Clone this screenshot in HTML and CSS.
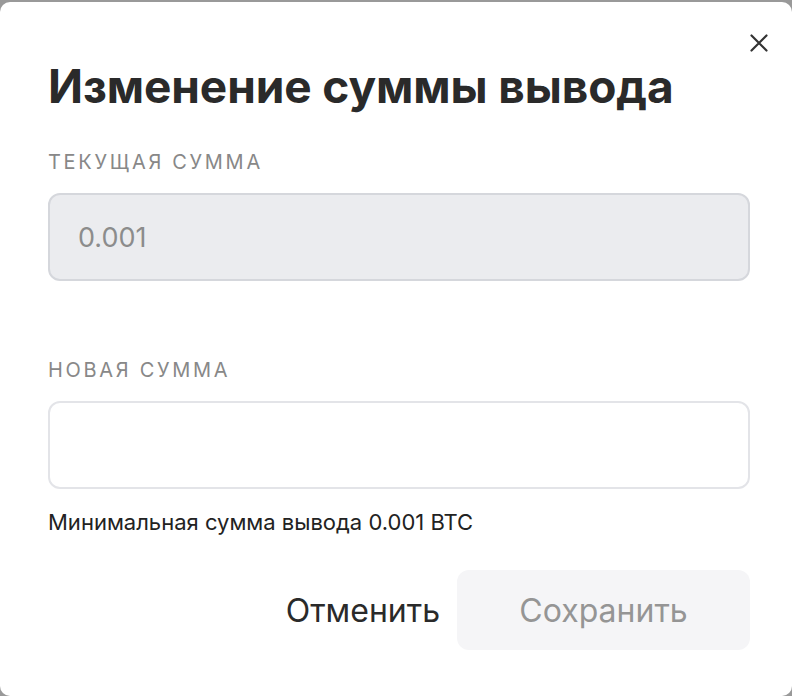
FILE: index.html
```html
<!DOCTYPE html>
<html lang="ru">
<head>
<meta charset="utf-8">
<title>Изменение суммы вывода</title>
<link rel="stylesheet" href="styles.css">
</head>
<body>
<div class="modal">
  <button class="close" aria-label="Закрыть">
    <svg width="18" height="18" viewBox="0 0 18 18"><path d="M1.5 1.5 L16.5 16.5 M16.5 1.5 L1.5 16.5" stroke="#333" stroke-width="2.2" stroke-linecap="round" fill="none"/></svg>
  </button>
  <h1 class="title">Изменение суммы вывода</h1>
  <div class="field">
    <div class="label">ТЕКУЩАЯ СУММА</div>
    <div class="input input-disabled">0.001</div>
  </div>
  <div class="field field-new">
    <div class="label">НОВАЯ СУММА</div>
    <div class="input"></div>
    <div class="hint">Минимальная сумма вывода 0.001 BTC</div>
  </div>
  <div class="actions">
    <button class="btn-cancel">Отменить</button>
    <button class="btn-save">Сохранить</button>
  </div>
</div>
</body>
</html>
```

FILE: styles.css
```css
html, body {
  margin: 0;
  padding: 0;
  height: 100%;
}
body {
  background: #999999;
  font-family: Inter, "Noto Sans", "Liberation Sans", sans-serif;
  padding-top: 2px;
  box-sizing: border-box;
}
.modal {
  position: relative;
  background: #ffffff;
  border-radius: 10px;
  height: 694px;
  box-sizing: border-box;
  padding: 60px 42px 0 48px;
}
.close {
  position: absolute;
  top: 32px;
  right: 24px;
  width: 18px;
  height: 18px;
  padding: 0;
  border: 0;
  background: none;
  display: flex;
}
.title {
  margin: 0;
  font-size: 46px;
  line-height: 48px;
  font-weight: 700;
  color: #2a2a2a;
  letter-spacing: -0.1px;
}
.field {
  display: flex;
  flex-direction: column;
  margin-top: 40px;
}
.field-new {
  margin-top: 77px;
}
.label {
  font-size: 20px;
  line-height: 24px;
  color: #888888;
  letter-spacing: 2.7px;
  margin-bottom: 19px;
}
.input {
  height: 88px;
  box-sizing: border-box;
  border: 2px solid #e3e4e8;
  border-radius: 12px;
  background: #fff;
  display: flex;
  align-items: center;
  padding-left: 28px;
  font-size: 27px;
  color: #8c8c8c;
}
.input-disabled {
  background: #ebecef;
  border-color: #d5d7dc;
}
.hint {
  margin-top: 20px;
  font-size: 22px;
  line-height: 26px;
  color: #222;
}
.actions {
  display: flex;
  justify-content: flex-end;
  align-items: center;
  gap: 17px;
  margin-top: 35px;
}
.btn-cancel {
  border: 0;
  background: none;
  padding: 0;
  font-family: inherit;
  font-size: 32px;
  color: #2a2a2a;
}
.btn-save {
  width: 293px;
  height: 80px;
  border: 0;
  border-radius: 12px;
  background: #f5f5f7;
  font-family: inherit;
  font-size: 32px;
  color: #959595;
}
```
